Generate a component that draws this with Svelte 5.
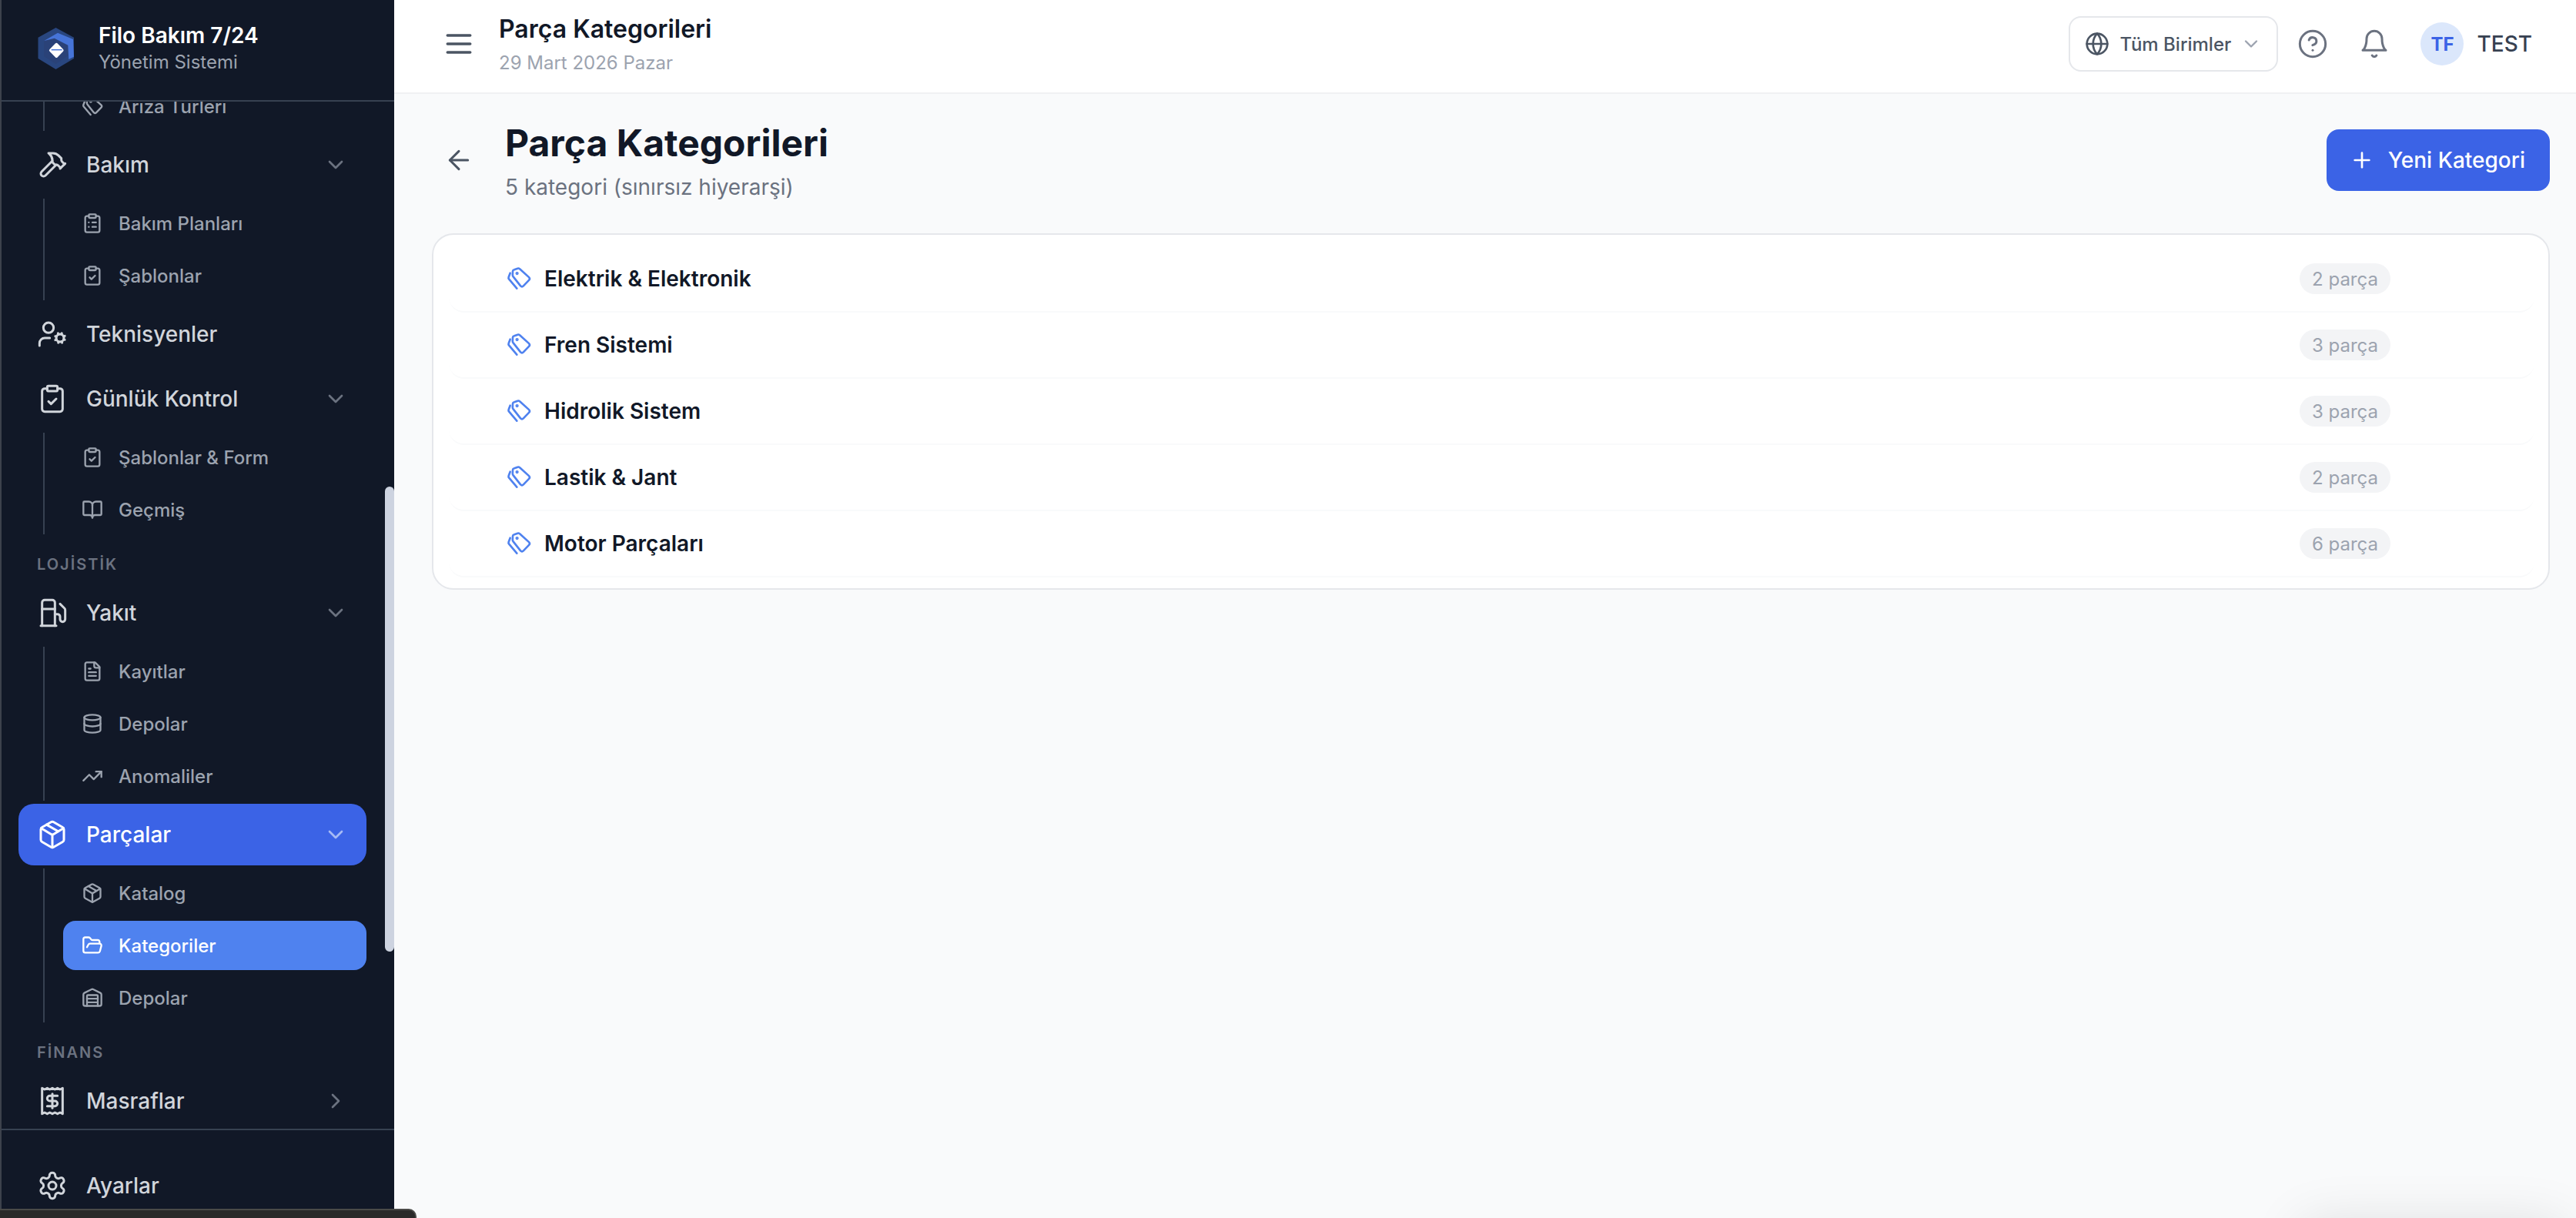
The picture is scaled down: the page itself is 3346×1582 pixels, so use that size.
<script>
  const icons = {
    hammer: '<path d="m15 12-8.373 8.373a1 1 0 1 1-3-3L12 9"/><path d="m18 15 4-4"/><path d="m21.5 11.5-1.914-1.914A2 2 0 0 1 19 8.172V7l-2.26-2.26a6 6 0 0 0-4.202-1.756L9 2.96l.92.82A6.18 6.18 0 0 1 12 8.4V10l2 2h1.172a2 2 0 0 1 1.414.586L18.5 14.5"/>',
    userCog: '<circle cx="18" cy="15" r="3"/><circle cx="9" cy="7" r="4"/><path d="M10 15H6a4 4 0 0 0-4 4v2"/><path d="m21.7 16.4-.9-.3"/><path d="m15.2 13.9-.9-.3"/><path d="m16.6 18.7.3-.9"/><path d="m19.1 12.2.3-.9"/><path d="m19.6 18.7-.4-1"/><path d="m16.8 12.3-.4-1"/><path d="m14.3 16.6 1-.4"/><path d="m20.7 13.8 1-.4"/>',
    clipCheck: '<rect width="8" height="4" x="8" y="2" rx="1" ry="1"/><path d="M16 4h2a2 2 0 0 1 2 2v14a2 2 0 0 1-2 2H6a2 2 0 0 1-2-2V6a2 2 0 0 1 2-2h2"/><path d="m9 14 2 2 4-4"/>',
    clipList: '<rect width="8" height="4" x="8" y="2" rx="1" ry="1"/><path d="M16 4h2a2 2 0 0 1 2 2v14a2 2 0 0 1-2 2H6a2 2 0 0 1-2-2V6a2 2 0 0 1 2-2h2"/><path d="M12 11h4"/><path d="M12 16h4"/><path d="M8 11h.01"/><path d="M8 16h.01"/>',
    book: '<path d="M12 7v14"/><path d="M3 18a1 1 0 0 1-1-1V4a1 1 0 0 1 1-1h5a4 4 0 0 1 4 4 4 4 0 0 1 4-4h5a1 1 0 0 1 1 1v13a1 1 0 0 1-1 1h-6a3 3 0 0 0-3 3 3 3 0 0 0-3-3z"/>',
    fuel: '<line x1="3" x2="15" y1="22" y2="22"/><line x1="4" x2="14" y1="9" y2="9"/><path d="M14 22V4a2 2 0 0 0-2-2H6a2 2 0 0 0-2 2v18"/><path d="M14 13h2a2 2 0 0 1 2 2v2a2 2 0 0 0 2 2a2 2 0 0 0 2-2V9.83a2 2 0 0 0-.59-1.42L18 5"/>',
    file: '<path d="M15 2H6a2 2 0 0 0-2 2v16a2 2 0 0 0 2 2h12a2 2 0 0 0 2-2V7Z"/><path d="M14 2v4a2 2 0 0 0 2 2h4"/><path d="M10 9H8"/><path d="M16 13H8"/><path d="M16 17H8"/>',
    database: '<ellipse cx="12" cy="5" rx="9" ry="3"/><path d="M3 5V19A9 3 0 0 0 21 19V5"/><path d="M3 12A9 3 0 0 0 21 12"/>',
    trend: '<polyline points="22 7 13.5 15.5 8.5 10.5 2 17"/><polyline points="16 7 22 7 22 13"/>',
    package: '<path d="M11 21.73a2 2 0 0 0 2 0l7-4A2 2 0 0 0 21 16V8a2 2 0 0 0-1-1.73l-7-4a2 2 0 0 0-2 0l-7 4A2 2 0 0 0 3 8v8a2 2 0 0 0 1 1.73z"/><path d="M12 22V12"/><path d="m3.3 7 7.703 4.734a2 2 0 0 0 1.994 0L20.7 7"/><path d="m7.5 4.27 9 5.15"/>',
    folder: '<path d="m6 14 1.5-2.9A2 2 0 0 1 9.24 10H20a2 2 0 0 1 1.94 2.5l-1.54 6a2 2 0 0 1-1.95 1.5H4a2 2 0 0 1-2-2V5a2 2 0 0 1 2-2h3.9a2 2 0 0 1 1.69.9l.81 1.2a2 2 0 0 0 1.69.9H18a2 2 0 0 1 2 2v2"/>',
    warehouse: '<path d="M18 21V10a1 1 0 0 0-1-1H7a1 1 0 0 0-1 1v11"/><path d="M22 19a2 2 0 0 1-2 2H4a2 2 0 0 1-2-2V8.347a2 2 0 0 1 1.106-1.789l8-4a2 2 0 0 1 1.788 0l8 4A2 2 0 0 1 22 8.347z"/><path d="M6 13h12"/><path d="M6 17h12"/>',
    receipt: '<path d="M4 2v20l2-1 2 1 2-1 2 1 2-1 2 1 2-1 2 1V2l-2 1-2-1-2 1-2-1-2 1-2-1-2 1Z"/><path d="M16 8h-6a2 2 0 1 0 0 4h4a2 2 0 1 1 0 4H8"/><path d="M12 17.5v-11"/>',
    settings: '<path d="M12.22 2h-.44a2 2 0 0 0-2 2v.18a2 2 0 0 1-1 1.73l-.43.25a2 2 0 0 1-2 0l-.15-.08a2 2 0 0 0-2.73.73l-.22.38a2 2 0 0 0 .73 2.73l.15.1a2 2 0 0 1 1 1.72v.51a2 2 0 0 1-1 1.74l-.15.09a2 2 0 0 0-.73 2.73l.22.38a2 2 0 0 0 2.73.73l.15-.08a2 2 0 0 1 2 0l.43.25a2 2 0 0 1 1 1.73V20a2 2 0 0 0 2 2h.44a2 2 0 0 0 2-2v-.18a2 2 0 0 1 1-1.73l.43-.25a2 2 0 0 1 2 0l.15.08a2 2 0 0 0 2.73-.73l.22-.39a2 2 0 0 0-.73-2.73l-.15-.08a2 2 0 0 1-1-1.74v-.5a2 2 0 0 1 1-1.74l.15-.09a2 2 0 0 0 .73-2.73l-.22-.38a2 2 0 0 0-2.73-.73l-.15.08a2 2 0 0 1-2 0l-.43-.25a2 2 0 0 1-1-1.73V4a2 2 0 0 0-2-2z"/><circle cx="12" cy="12" r="3"/>',
    tags: '<path d="M7.500 3.200 10.800 2a2 2 0 0 1 2 .5L21.800 10.600a2 2 0 0 1 0 2.800L16.400 19a2 2 0 0 1-2.800 0L6.500 10a2 2 0 0 1-.6-1.600L6 4.800a1.800 1.800 0 0 1 1.500-1.600Z"/><path d="M3.500 6.500 2 10.500a2 2 0 0 0 .4 2L10 21.500"/><circle cx="10.200" cy="6.800" r=".6" fill="currentColor"/>',
    chevDown: '<path d="m6 9 6 6 6-6"/>',
    chevRight: '<path d="m9 18 6-6-6-6"/>',
    menu: '<line x1="4" x2="20" y1="6" y2="6"/><line x1="4" x2="20" y1="12" y2="12"/><line x1="4" x2="20" y1="18" y2="18"/>',
    globe: '<circle cx="12" cy="12" r="10"/><path d="M12 2a14.5 14.5 0 0 0 0 20 14.5 14.5 0 0 0 0-20"/><path d="M2 12h20"/>',
    help: '<circle cx="12" cy="12" r="10"/><path d="M9.09 9a3 3 0 0 1 5.83 1c0 2-3 3-3 3"/><path d="M12 17h.01"/>',
    bell: '<path d="M6 8a6 6 0 0 1 12 0c0 7 3 9 3 9H3s3-2 3-9"/><path d="M10.3 21a1.94 1.94 0 0 0 3.4 0"/>',
    back: '<path d="m12 19-7-7 7-7"/><path d="M19 12H5"/>',
    plus: '<path d="M5 12h14"/><path d="M12 5v14"/>'
  };

  const nav = [
    { sub: [{ label: 'Arıza Türleri', icon: 'tags' }] },
    { label: 'Bakım', icon: 'hammer', open: true, sub: [
      { label: 'Bakım Planları', icon: 'clipList' },
      { label: 'Şablonlar', icon: 'clipCheck' }
    ] },
    { label: 'Teknisyenler', icon: 'userCog' },
    { label: 'Günlük Kontrol', icon: 'clipCheck', open: true, sub: [
      { label: 'Şablonlar & Form', icon: 'clipCheck' },
      { label: 'Geçmiş', icon: 'book' }
    ] },
    { section: 'LOJİSTİK' },
    { label: 'Yakıt', icon: 'fuel', open: true, sub: [
      { label: 'Kayıtlar', icon: 'file' },
      { label: 'Depolar', icon: 'database' },
      { label: 'Anomaliler', icon: 'trend' }
    ] },
    { label: 'Parçalar', icon: 'package', open: true, active: true, sub: [
      { label: 'Katalog', icon: 'package' },
      { label: 'Kategoriler', icon: 'folder', active: true },
      { label: 'Depolar', icon: 'warehouse' }
    ] },
    { section: 'FİNANS' },
    { label: 'Masraflar', icon: 'receipt', closed: true }
  ];

  const categories = [
    { name: 'Elektrik & Elektronik', count: 2 },
    { name: 'Fren Sistemi', count: 3 },
    { name: 'Hidrolik Sistem', count: 3 },
    { name: 'Lastik & Jant', count: 2 },
    { name: 'Motor Parçaları', count: 6 }
  ];
</script>

{#snippet icon(name, cls)}
  <svg class={cls} viewBox="0 0 24 24" fill="none" stroke="currentColor" stroke-linecap="round" stroke-linejoin="round">{@html icons[name]}</svg>
{/snippet}

<div class="app">
  <aside class="sidebar">
    <div class="brand">
      <svg class="logo" viewBox="0 0 48 54">
        <path d="M23.500 0 47 12.700V40L23.500 54 .5 40V12.700Z" fill="#29467f" />
        <path d="M23.500 12 39.500 22V36L23.500 47 8 37V17Z" fill="#2a4278" />
        <path d="M8.300 17 26 6.700 46 15 47 37.700 40.300 41 39.300 22.700 21.700 13.700Z" fill="#4674d8" />
        <path d="M22.800 20.500a2 2 0 0 1 3 0L33 28a2 2 0 0 1 0 2.800L25.800 38.200a2 2 0 0 1-3 0L15.500 30.800a2 2 0 0 1 0-2.800Z" fill="#fff" />
        <path d="M17.700 28.700H31.700" stroke="#4674d8" stroke-width="1.500" />
      </svg>
      <div>
        <div class="brand-name">Filo Bakım 7/24</div>
        <div class="brand-sub">Yönetim Sistemi</div>
      </div>
    </div>

    <nav class="nav">
      <div class="nav-inner">
        {#each nav as item}
          {#if item.section}
            <div class="section">{item.section}</div>
          {:else}
            {#if item.label}
              <div class="item" class:active={item.active}>
                {@render icon(item.icon, 'item-icon')}
                <span class="item-label">{item.label}</span>
                {#if item.open}{@render icon('chevDown', 'chev')}{/if}
                {#if item.closed}{@render icon('chevRight', 'chev')}{/if}
              </div>
            {/if}
            {#if item.sub}
              <div class="sub">
                {#each item.sub as s}
                  <div class="sub-item" class:active={s.active}>
                    {@render icon(s.icon, 'sub-icon')}
                    <span>{s.label}</span>
                  </div>
                {/each}
              </div>
            {/if}
          {/if}
        {/each}
      </div>
      <div class="scrollbar"></div>
    </nav>

    <div class="side-foot">
      <div class="item">
        {@render icon('settings', 'item-icon')}
        <span class="item-label">Ayarlar</span>
      </div>
    </div>
  </aside>

  <div class="content">
    <header class="topbar">
      {@render icon('menu', 'menu-icon')}
      <div class="top-title">
        <div class="top-name">Parça Kategorileri</div>
        <div class="top-date">29 Mart 2026 Pazar</div>
      </div>
      <div class="top-right">
        <div class="unit-select">
          {@render icon('globe', 'globe-icon')}
          <span>Tüm Birimler</span>
          {@render icon('chevDown', 'unit-chev')}
        </div>
        {@render icon('help', 'top-icon')}
        {@render icon('bell', 'top-icon bell')}
        <div class="user">
          <div class="avatar">TF</div>
          <span>TEST</span>
        </div>
      </div>
    </header>

    <main class="main">
      <div class="page-head">
        {@render icon('back', 'back-icon')}
        <div class="page-title">
          <h1>Parça Kategorileri</h1>
          <p>5 kategori (sınırsız hiyerarşi)</p>
        </div>
        <button class="primary">
          {@render icon('plus', 'plus-icon')}
          Yeni Kategori
        </button>
      </div>

      <section class="card">
        {#each categories as c}
          <div class="row">
            {@render icon('tags', 'tag-icon')}
            <span class="row-name">{c.name}</span>
            <span class="badge">{c.count} parça</span>
          </div>
        {/each}
      </section>
    </main>
  </div>

  <div class="dock"></div>
  <div class="offscreen-shadow"></div>
</div>

<style>
  :global(body) {
    margin: 0;
    background: #f9fafb;
    font-family: Inter, "Noto Sans", sans-serif;
  }

  .app {
    position: relative;
    display: flex;
    width: 3346px;
    height: 1582px;
    overflow: hidden;
  }

  .sidebar {
    display: flex;
    flex-direction: column;
    flex: none;
    box-sizing: border-box;
    width: 512px;
    height: 100%;
    background: #111827;
    border-left: 2px solid #3d424c;
  }

  .brand {
    display: flex;
    flex: none;
    align-items: center;
    gap: 31px;
    box-sizing: border-box;
    height: 132px;
    padding: 0 0 6px 47px;
    border-bottom: 2px solid #374151;
  }

  .logo {
    width: 48px;
    height: 54px;
    margin-top: 2px;
  }

  .brand-name {
    color: #fff;
    font-size: 28px;
    font-weight: 600;
    line-height: 36px;
  }

  .brand-sub {
    margin-top: 1px;
    color: #9ca3af;
    font-size: 24px;
    line-height: 32px;
  }

  .nav {
    position: relative;
    flex: 1;
    min-height: 0;
    overflow: hidden;
    border-bottom: 2px solid #374151;
  }

  .nav-inner {
    display: flex;
    flex-direction: column;
    gap: 4px;
    margin-top: -26px;
    padding: 0 36px 0 22px;
  }

  .scrollbar {
    position: absolute;
    top: 500px;
    right: 0;
    width: 12px;
    height: 604px;
    border-radius: 6px;
    background: #cdd3e0;
  }

  .item {
    display: flex;
    flex: none;
    align-items: center;
    box-sizing: border-box;
    height: 80px;
    padding: 0 24px;
    border-radius: 20px;
    color: #d1d5db;
    font-size: 28px;
    font-weight: 500;
  }

  .item.active {
    background: #3b63e6;
    color: #fff;
  }

  .item-icon {
    flex: none;
    width: 40px;
    height: 40px;
    margin-right: 24px;
    stroke-width: 1.800;
  }

  .item-label {
    flex: 1;
  }

  .chev {
    flex: none;
    width: 32px;
    height: 32px;
    color: #6b7280;
    stroke-width: 2;
  }

  .item.active .chev {
    color: #a6bbf5;
  }

  .sub {
    display: flex;
    flex-direction: column;
    gap: 4px;
    margin-left: 32px;
    padding-left: 24px;
    border-left: 2px solid #374151;
  }

  .sub-item {
    display: flex;
    align-items: center;
    gap: 20px;
    box-sizing: border-box;
    height: 64px;
    padding-left: 24px;
    border-radius: 16px;
    color: #9ca3af;
    font-size: 24px;
    font-weight: 500;
  }

  .sub-item.active {
    background: #4f82ef;
    color: #fff;
  }

  .sub-icon {
    flex: none;
    width: 28px;
    height: 28px;
    stroke-width: 2;
  }

  .section {
    margin-top: 19px;
    margin-bottom: 3px;
    padding-left: 24px;
    color: #6b7280;
    font-size: 20px;
    font-weight: 600;
    letter-spacing: 2px;
    line-height: 32px;
  }

  .side-foot {
    flex: none;
    box-sizing: border-box;
    height: 114px;
    padding: 32px 36px 0 22px;
  }

  .content {
    display: flex;
    flex: 1;
    flex-direction: column;
    min-width: 0;
  }

  .topbar {
    display: flex;
    flex: none;
    align-items: center;
    box-sizing: border-box;
    height: 122px;
    padding: 0 57px 6px 62px;
    background: #fff;
    border-bottom: 2px solid #f0f1f3;
  }

  .menu-icon {
    flex: none;
    width: 44px;
    height: 44px;
    margin-right: 30px;
    color: #4b5563;
    stroke-width: 2;
  }

  .top-title {
    margin-top: 2px;
  }

  .top-name {
    color: #111827;
    font-size: 32px;
    font-weight: 600;
    line-height: 40px;
  }

  .top-date {
    margin-top: 8px;
    color: #9ca3af;
    font-size: 24px;
    line-height: 32px;
  }

  .top-right {
    display: flex;
    align-items: center;
    margin-left: auto;
  }

  .unit-select {
    display: flex;
    align-items: center;
    box-sizing: border-box;
    width: 272px;
    height: 72px;
    padding: 0 19px;
    border: 2px solid #e5e7eb;
    border-radius: 16px;
    color: #4b5563;
    font-size: 24px;
    font-weight: 500;
    white-space: nowrap;
  }

  .globe-icon {
    flex: none;
    width: 32px;
    height: 32px;
    margin-right: 13px;
    stroke-width: 2;
  }

  .unit-chev {
    flex: none;
    width: 28px;
    height: 28px;
    margin-left: 12px;
    color: #9ca3af;
    stroke-width: 2;
  }

  .top-icon {
    flex: none;
    width: 40px;
    height: 40px;
    margin-left: 25px;
    color: #6b7280;
    stroke-width: 1.800;
  }

  .top-icon.bell {
    margin-left: 40px;
  }

  .user {
    display: flex;
    align-items: center;
    gap: 17px;
    margin-left: 40px;
    color: #374151;
    font-size: 28px;
    font-weight: 500;
  }

  .avatar {
    display: flex;
    align-items: center;
    justify-content: center;
    width: 56px;
    height: 56px;
    border-radius: 50%;
    background: #dbe7fb;
    color: #3b63e6;
    font-size: 24px;
    font-weight: 700;
  }

  .main {
    flex: 1;
    padding: 36px 34px 0 49px;
  }

  .page-head {
    display: flex;
    align-items: flex-start;
    margin-bottom: 42px;
  }

  .back-icon {
    flex: none;
    width: 40px;
    height: 40px;
    margin: 30px 40px 0 15px;
    color: #4b5563;
    stroke-width: 1.800;
  }

  h1 {
    margin: 0;
    color: #111827;
    font-size: 48px;
    font-weight: 700;
    line-height: 56px;
  }

  .page-title p {
    margin: 11px 0 0;
    color: #6b7280;
    font-size: 28px;
    line-height: 36px;
  }

  .primary {
    display: flex;
    align-items: center;
    gap: 18px;
    height: 80px;
    margin: 10px 0 0 auto;
    padding: 0 32px 0 30px;
    border: 0;
    border-radius: 16px;
    background: #3b63e6;
    color: #fff;
    font: 500 28px Inter, sans-serif;
  }

  .plus-icon {
    width: 32px;
    height: 32px;
    stroke-width: 2;
  }

  .card {
    box-sizing: border-box;
    height: 463px;
    padding: 15px 18px 15px 20px;
    background: #fff;
    border: 2px solid #e5e7eb;
    border-radius: 28px;
  }

  .row {
    display: flex;
    align-items: center;
    box-sizing: border-box;
    height: 86px;
    padding: 0 187px 0 75px;
    border-bottom: 2px solid #f9fafb;
    border-radius: 0 0 20px 20px;
  }

  .tag-icon {
    flex: none;
    width: 32px;
    height: 32px;
    margin-right: 17px;
    color: #4f82ef;
    stroke-width: 2;
  }

  .row-name {
    flex: 1;
    color: #111827;
    font-size: 28px;
    font-weight: 600;
  }

  .badge {
    display: flex;
    align-items: center;
    justify-content: center;
    width: 118px;
    height: 40px;
    border-radius: 20px;
    background: #f3f4f6;
    color: #9ca3af;
    font-size: 24px;
  }

  .dock {
    position: absolute;
    left: -10px;
    top: 1570px;
    width: 551px;
    height: 40px;
    border: 2px solid #4a4a48;
    border-radius: 10px;
    background: #2a2a2a;
    box-sizing: border-box;
  }

  .offscreen-shadow {
    position: absolute;
    left: 3000px;
    top: 1600px;
    width: 320px;
    height: 60px;
    box-shadow: 0 0 70px 10px rgba(0, 0, 0, 0.12);
  }
</style>
